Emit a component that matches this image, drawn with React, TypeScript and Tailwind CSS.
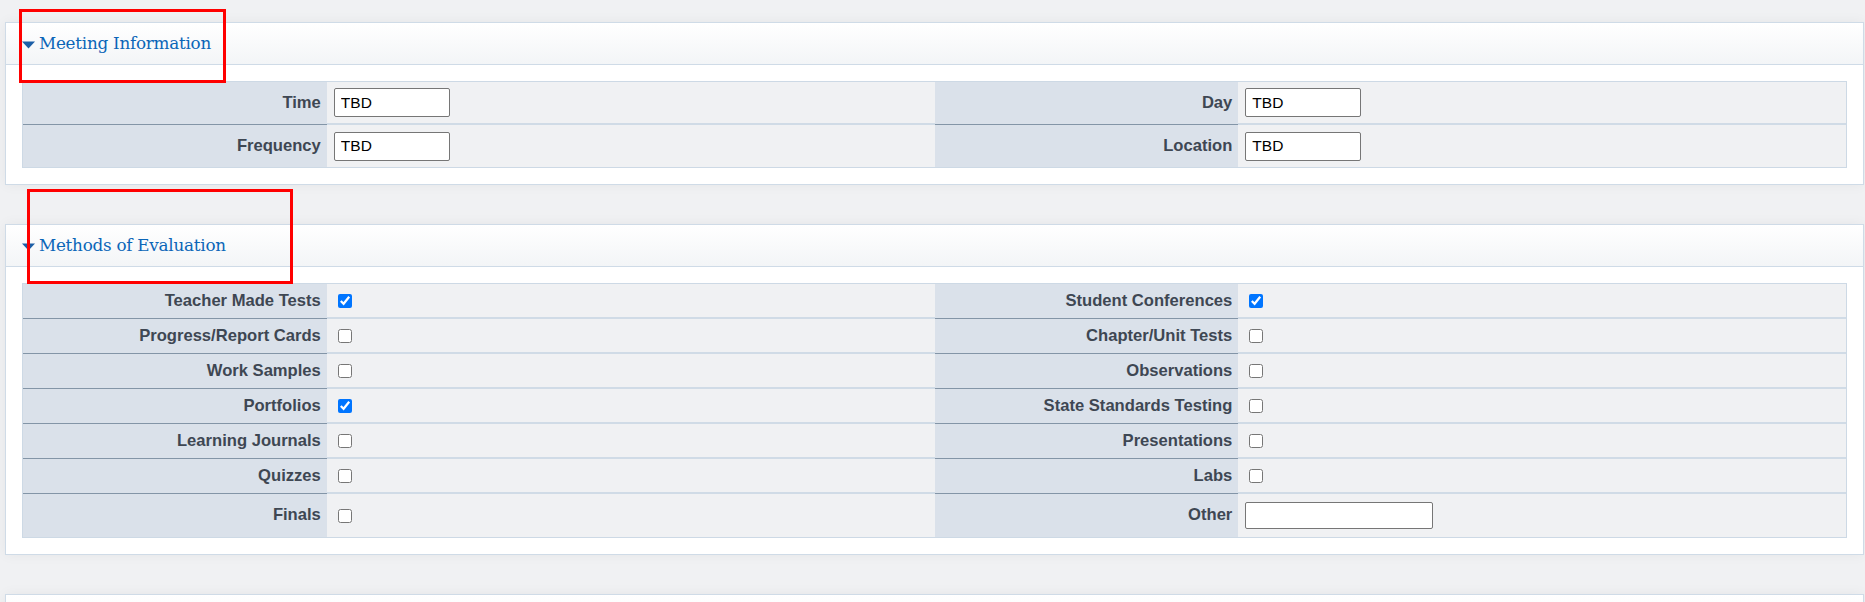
import React from 'react';

type Item = { label: string; checked?: boolean; input?: boolean };

const meetingRows: [Item, Item][] = [
  [{ label: 'Time', input: true }, { label: 'Day', input: true }],
  [{ label: 'Frequency', input: true }, { label: 'Location', input: true }],
];

const evalRows: [Item, Item][] = [
  [{ label: 'Teacher Made Tests', checked: true }, { label: 'Student Conferences', checked: true }],
  [{ label: 'Progress/Report Cards' }, { label: 'Chapter/Unit Tests' }],
  [{ label: 'Work Samples' }, { label: 'Observations' }],
  [{ label: 'Portfolios', checked: true }, { label: 'State Standards Testing' }],
  [{ label: 'Learning Journals' }, { label: 'Presentations' }],
  [{ label: 'Quizzes' }, { label: 'Labs' }],
];

const Caret = () => (
  <svg width="13" height="8" viewBox="0 0 13 8" className="shrink-0 mt-[2px]">
    <path d="M0 0.5 L13 0.5 L6.5 7.5 Z" fill="#1c5fa7" />
  </svg>
);

const Panel: React.FC<{ title: string; children?: React.ReactNode }> = ({ title, children }) => (
  <div className="bg-white border border-[#cfdbe7] shadow-[0_0_12px_rgba(0,0,0,0.05)]">
    <div className="h-[42px] flex items-center gap-[4px] pl-[16px] border-b border-[#cfdbe7] bg-gradient-to-b from-white to-[#f3f5f7]">
      <Caret />
      <span className="text-[16.8px] text-[#0b66b8] font-['DejaVu_Serif',serif] tracking-[-0.25px]">{title}</span>
    </div>
    {children && <div className="p-[16px]">{children}</div>}
  </div>
);

const TextBox: React.FC<{ value?: string; wide?: boolean }> = ({ value = '', wide }) => (
  <input
    type="text"
    defaultValue={value}
    className={`${wide ? 'w-[188px] h-[27px]' : 'w-[116px] h-[29px]'} bg-white border border-[#767676] rounded-[2px] px-[6px] text-[15.5px] text-black font-['Liberation_Sans',Arial,sans-serif] outline-none`}
  />
);

const Cells: React.FC<{ item: Item; last?: boolean; rowH: string }> = ({ item, last, rowH }) => (
  <>
    <div
      className={`col-span-1 ${rowH} flex items-center justify-end pr-[6px] bg-[#dae1ea] ${last ? '' : 'border-b border-[#8395a7]'} text-[16.6px] font-bold text-[#3e4753]`}
    >
      {item.label}
    </div>
    <div className={`col-span-2 ${rowH} flex items-center pl-[7px] bg-[#f0f1f3] ${last ? '' : 'border-b-2 border-[#d0dbe6]'}`}>
      {item.input ? (
        <TextBox value={item.label === 'Other' ? '' : 'TBD'} wide={item.label === 'Other'} />
      ) : (
        <input
          type="checkbox"
          defaultChecked={item.checked}
          className="ml-[4px] mt-[1px] w-[14px] h-[14px] accent-[#0075ff]"
        />
      )}
    </div>
  </>
);

export default function App() {
  return (
    <div className="relative min-h-screen bg-[#f0f1f3] pt-[22px] pl-[5px] pr-[1px] font-['Liberation_Sans',Arial,sans-serif]">
      <div className="flex flex-col gap-[39px]">
        <Panel title="Meeting Information">
          <div className="border border-[#cdd9e5]">
            <div className="grid grid-cols-6">
              <Cells item={meetingRows[0][0]} rowH="h-[43px]" />
              <Cells item={meetingRows[0][1]} rowH="h-[43px]" />
            </div>
            <div className="grid grid-cols-6">
              <Cells item={meetingRows[1][0]} rowH="h-[42px]" last />
              <Cells item={meetingRows[1][1]} rowH="h-[42px]" last />
            </div>
          </div>
        </Panel>

        <Panel title="Methods of Evaluation">
          <div className="border border-[#cdd9e5]">
            {evalRows.map((row, i) => (
              <div key={i} className="grid grid-cols-6">
                <Cells item={row[0]} rowH="h-[35px]" />
                <Cells item={row[1]} rowH="h-[35px]" />
              </div>
            ))}
            <div className="grid grid-cols-6">
              <Cells item={{ label: 'Finals' }} rowH="h-[43px]" last />
              <Cells item={{ label: 'Other', input: true }} rowH="h-[43px]" last />
            </div>
          </div>
        </Panel>

        <Panel title="" />
      </div>

      {/* annotation boxes */}
      <div className="absolute left-[19px] top-[9px] w-[207px] h-[74px] border-[3px] border-[#ff0000] pointer-events-none" />
      <div className="absolute left-[27px] top-[189px] w-[266px] h-[95px] border-[3px] border-[#ff0000] pointer-events-none" />
    </div>
  );
}
